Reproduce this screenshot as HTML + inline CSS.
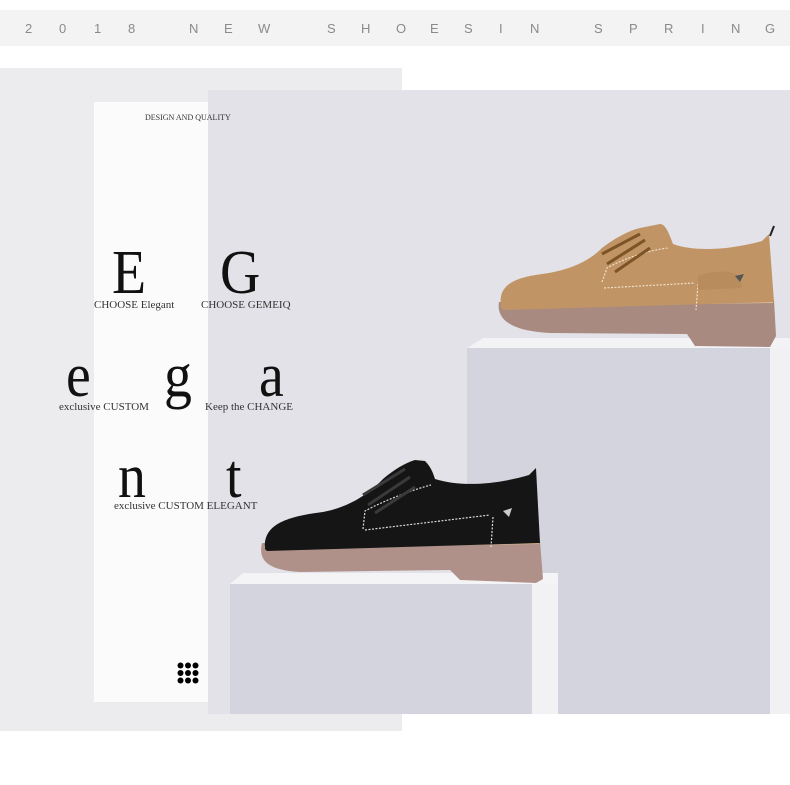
<!DOCTYPE html>
<html><head><meta charset="utf-8"><style>
html,body{margin:0;padding:0;background:#fff;width:790px;height:785px;overflow:hidden;position:relative;font-family:"Liberation Serif",serif;}
.a{position:absolute}
.band{left:0;top:10px;width:790px;height:36px;background:#f3f3f3;}
.band span{position:absolute;top:11px;font-family:"Liberation Sans",sans-serif;font-size:13px;color:#8a8a8a;}
.big{font-size:62px;line-height:1;color:#111;transform:scaleX(0.9);transform-origin:left top}
.cap{font-size:11px;color:#333;white-space:nowrap}
</style></head><body>
<div class="a band">
<span style="left:25px">2</span><span style="left:59px">0</span><span style="left:94px">1</span><span style="left:128px">8</span>
<span style="left:189px">N</span><span style="left:224px">E</span><span style="left:258px">W</span>
<span style="left:327px">S</span><span style="left:361px">H</span><span style="left:396px">O</span><span style="left:430px">E</span><span style="left:464px">S</span><span style="left:499px">I</span><span style="left:530px">N</span>
<span style="left:594px">S</span><span style="left:629px">P</span><span style="left:664px">R</span><span style="left:701px">I</span><span style="left:731px">N</span><span style="left:765px">G</span>
</div>
<div class="a" style="left:0;top:68px;width:402px;height:663px;background:#ececee"></div>
<div class="a" style="left:94px;top:102px;width:114px;height:600px;background:#fbfbfb"></div>
<div class="a" style="left:208px;top:90px;width:582px;height:624px;background:#e2e2e8"></div>
<div class="a" style="left:467px;top:338px;width:323px;height:10px;background:#f3f3f5;clip-path:polygon(5% 0,100% 0,100% 100%,0 100%)"></div>
<div class="a" style="left:467px;top:348px;width:303px;height:366px;background:#d4d4de"></div>
<div class="a" style="left:770px;top:348px;width:20px;height:366px;background:#f1f1f3"></div>
<div class="a" style="left:230px;top:573px;width:328px;height:11px;background:#f4f4f6;clip-path:polygon(4% 0,100% 0,100% 100%,0 100%)"></div>
<div class="a" style="left:230px;top:584px;width:302px;height:130px;background:#d4d4de"></div>
<div class="a" style="left:532px;top:584px;width:26px;height:130px;background:#f2f2f4"></div>
<div class="a cap" style="left:145px;top:113px;font-size:8px">DESIGN AND QUALITY</div>
<div class="a big" style="left:112px;top:242px">E</div>
<div class="a big" style="left:220px;top:242px">G</div>
<div class="a cap" style="left:94px;top:299px">CHOOSE Elegant</div>
<div class="a cap" style="left:201px;top:299px">CHOOSE GEMEIQ</div>
<div class="a big" style="left:66px;top:345px">e</div>
<div class="a big" style="left:164px;top:345px">g</div>
<div class="a big" style="left:259px;top:345px">a</div>
<div class="a cap" style="left:59px;top:401px">exclusive CUSTOM</div>
<div class="a cap" style="left:205px;top:401px">Keep the CHANGE</div>
<div class="a big" style="left:118px;top:446px">n</div>
<div class="a big" style="left:226px;top:446px">t</div>
<div class="a cap" style="left:114px;top:500px">exclusive CUSTOM ELEGANT</div>
<svg class="a" style="left:177px;top:662px" width="22" height="22" viewBox="0 0 22 22"><g fill="#000">
<circle cx="3.5" cy="3.5" r="3"/><circle cx="11" cy="3.5" r="3"/><circle cx="18.5" cy="3.5" r="3"/>
<circle cx="3.5" cy="11" r="3"/><circle cx="11" cy="11" r="3"/><circle cx="18.5" cy="11" r="3"/>
<circle cx="3.5" cy="18.5" r="3"/><circle cx="11" cy="18.5" r="3"/><circle cx="18.5" cy="18.5" r="3"/></g></svg>
<svg class="a" style="left:490px;top:220px" width="300" height="140" viewBox="0 0 300 140">
<path d="M9,82 L284,80 L286,116 L280,127 L205,126 L197,114 L60,113 C22,111 6,100 9,82 Z" fill="#a88a80"/>
<path d="M11,86 L283,82" stroke="#dcc09a" stroke-width="2" fill="none"/>
<path d="M11,86 C8,66 22,58 52,54 C82,50 100,40 112,28 C125,18 140,10 150,8 L170,4 C176,4 180,16 183,24 C205,32 240,30 272,21 L279,14 L284,82 L13,90 Z" fill="#c19465"/>
<path d="M112,62 L117,48 C135,38 160,30 178,28 M114,68 L205,63 M208,64 L206,90" stroke="#efe0c8" stroke-width="1.2" stroke-dasharray="2 1.5" fill="none"/>
<path d="M112,34 L150,14 M117,44 L155,20 M125,52 L160,28" stroke="#7d5426" stroke-width="3" fill="none"/>
<path d="M280,16 L284,6" stroke="#222" stroke-width="2"/>
<path d="M208,56 C225,50 240,50 250,56 L252,68 L208,70 Z" fill="#b98c5e"/>
<polygon points="245,56 254,54 250,62" fill="#555"/>
</svg>
<svg class="a" style="left:255px;top:455px" width="300" height="140" viewBox="0 0 300 140">
<path d="M7,88 L285,86 L288,124 L281,128 L205,125 L195,115 L45,117 C12,115 3,105 7,88 Z" fill="#b0918a"/>
<path d="M9,92 L284,88" stroke="#d8b68c" stroke-width="2" fill="none"/>
<path d="M10,94 C8,72 26,62 68,57 C95,52 115,38 128,24 C140,14 150,8 160,5 L170,6 C176,12 178,18 180,24 C205,32 240,30 274,20 L281,13 L285,88 L12,96 Z" fill="#151515"/>
<path d="M108,74 L110,56 C130,45 160,34 176,30 M110,75 L235,60 M238,62 L236,92" stroke="#ddd" stroke-width="1.2" stroke-dasharray="2 1.5" fill="none"/>
<path d="M108,40 L150,14 M113,50 L155,22 M120,58 L160,32" stroke="#3a3a3a" stroke-width="3" fill="none"/>
<polygon points="248,56 257,53 254,62" fill="#ccc"/>
</svg>
</body></html>
